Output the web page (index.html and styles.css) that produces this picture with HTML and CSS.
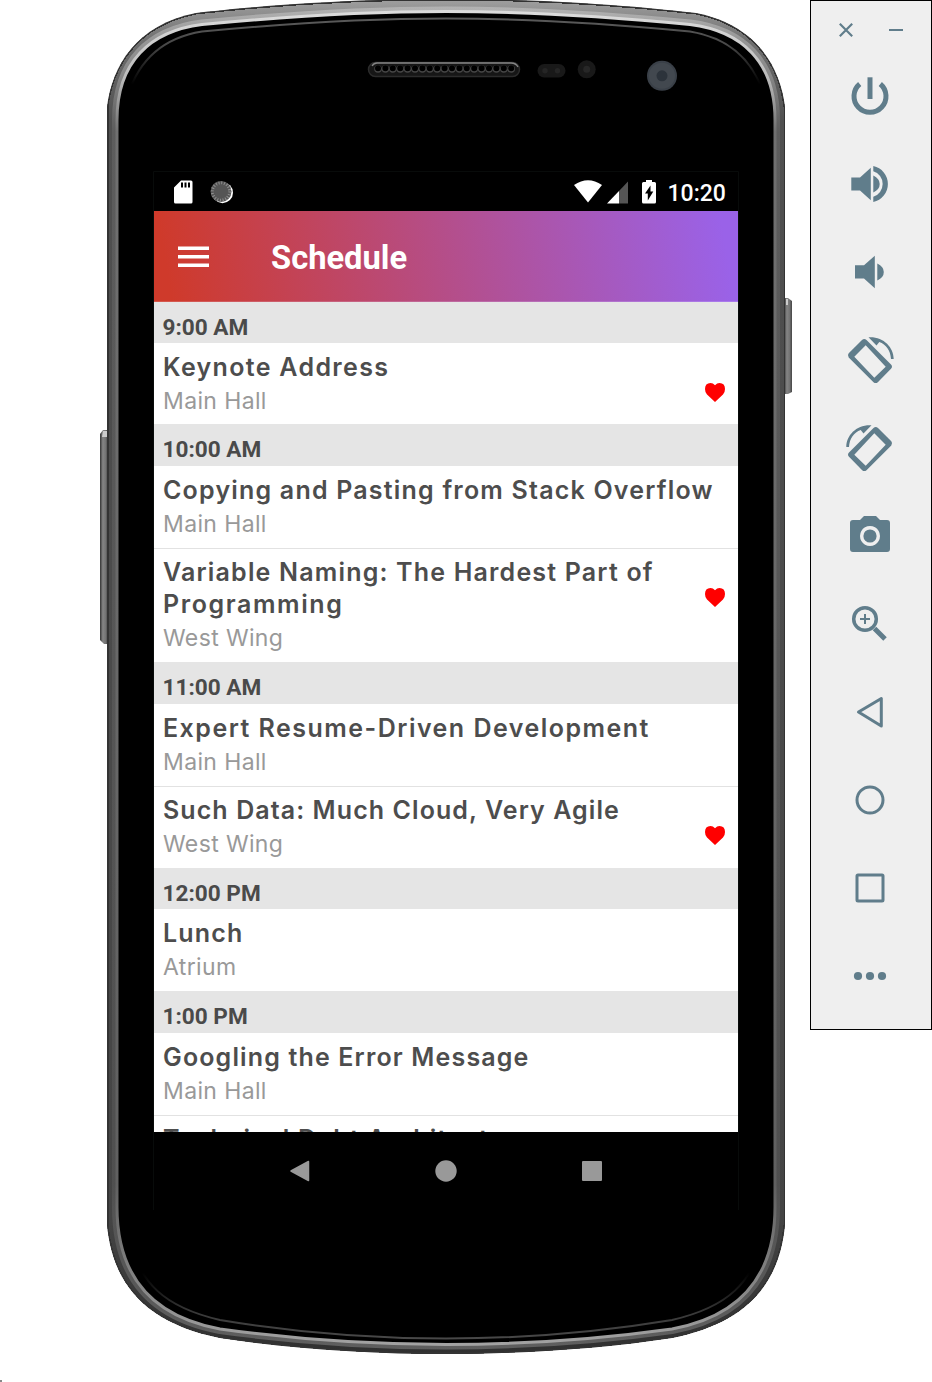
FILE: index.html
```html
<!DOCTYPE html>
<html lang="en">
<head>
<meta charset="utf-8">
<title>Schedule</title>
<link rel="stylesheet" href="styles.css">
</head>
<body>
<div class="desktop">
  <div class="phone">
    <svg class="shell" width="700" height="1382" viewBox="96 0 700 1382">
      <defs>
        <linearGradient id="body" x1="0" y1="0" x2="0" y2="1">
          <stop offset="0" stop-color="#a0a0a0"/><stop offset=".03" stop-color="#707070"/><stop offset=".09" stop-color="#505050"/><stop offset=".9" stop-color="#444"/><stop offset="1" stop-color="#303030"/>
        </linearGradient>
        <linearGradient id="edge" x1="0" y1="0" x2="0" y2="1">
          <stop offset="0" stop-color="#dcdcdc"/><stop offset=".05" stop-color="#bbb"/><stop offset=".09" stop-color="#707070"/><stop offset=".88" stop-color="#606060"/><stop offset=".96" stop-color="#888"/><stop offset="1" stop-color="#a2a2a2"/>
        </linearGradient>
        <linearGradient id="rim" x1="0" y1="0" x2="0" y2="1">
          <stop offset="0" stop-color="#5a5a5a"/><stop offset=".02" stop-color="#484848"/><stop offset=".05" stop-color="#000"/><stop offset=".95" stop-color="#000"/><stop offset=".98" stop-color="#383838"/><stop offset="1" stop-color="#484848"/>
        </linearGradient>
        <linearGradient id="key" x1="0" y1="0" x2="1" y2="0">
          <stop offset="0" stop-color="#333"/><stop offset=".35" stop-color="#858585"/><stop offset=".7" stop-color="#747474"/><stop offset="1" stop-color="#444"/>
        </linearGradient>
        <clipPath id="outline"><path d="M107 107C112 66 136 25 196 13C240 8 330 -1 446 -1S652 8 696 13C756 25 780 66 785 107V1225C779 1285 746 1323 672 1338C600 1349 520 1354 446 1354S292 1349 220 1338C146 1323 113 1285 107 1225Z"/></clipPath>
      </defs>
      <path d="M100 434l3-4h5v214h-4l-4-4z" fill="url(#key)"/>
      <path d="M784 298h4l4 3v91l-4 2h-4z" fill="url(#key)"/>
      <path d="M103 431h4v6h-5zM786 299h2v6h-2z" fill="#ccc"/>
      <g clip-path="url(#outline)">
        <path shape-rendering="crispEdges" d="M107 107C112 66 136 25 196 13C240 8 330 -1 446 -1S652 8 696 13C756 25 780 66 785 107V1225C779 1285 746 1323 672 1338C600 1349 520 1354 446 1354S292 1349 220 1338C146 1323 113 1285 107 1225Z" fill="url(#body)" stroke="#333" stroke-width="3"/>
        <path id="glass" d="M117 120C117 62 150 31 202 24.500C290 16 370 11.500 446 11.500S602 16 690 24.500C742 31 775 62 775 120V1207C775 1275 742 1316 672 1329C600 1339 520 1344.500 446 1344.500S292 1339 220 1329C150 1316 117 1275 117 1207Z" fill="none" stroke="url(#edge)" stroke-width="10" stroke-opacity=".4"/>
      </g>
      <path d="M117 120C117 62 150 31 202 24.500C290 16 370 11.500 446 11.500S602 16 690 24.500C742 31 775 62 775 120V1207C775 1275 742 1316 672 1329C600 1339 520 1344.500 446 1344.500S292 1339 220 1329C150 1316 117 1275 117 1207Z" fill="#000" stroke="url(#edge)" stroke-width="3"/>
      <path d="M128 95C139 60 162 38 202 31.500C290 23 370 18.500 446 18.500S602 23 690 31.500C730 38 753 60 764 95V1235C753 1283 728 1307 672 1320C600 1332 520 1338.500 446 1338.500S292 1332 220 1320C164 1307 139 1283 128 1235Z" fill="#000" stroke="url(#rim)" stroke-width="2"/>
      <rect x="368.500" y="62.500" width="151" height="14" rx="7" fill="#161616" stroke="#2c2c2c" stroke-width="1.500"/>
      <path d="M372 66q2-3 5-3h134q5 0 7 4" fill="none" stroke="#858585" stroke-width="1.300"/>
      <path d="M378 69h134" stroke="#464646" stroke-width="7.500" stroke-linecap="round" stroke-dasharray="0 7.400"/>
      <path d="M378 68.300h134" stroke="#000" stroke-width="6" stroke-linecap="round" stroke-dasharray="0 7.400"/>
      <rect x="537.500" y="64" width="28" height="13.500" rx="6.700" fill="#191919"/>
      <circle cx="545" cy="70.700" r="2.700" fill="#252525"/><circle cx="557.500" cy="70.700" r="2.700" fill="#252525"/>
      <circle cx="586.700" cy="69.300" r="9" fill="#191919"/><circle cx="586.700" cy="69.300" r="3.500" fill="#272727"/>
      <circle cx="662" cy="75.800" r="15" fill="#3a4048"/><circle cx="662" cy="75.800" r="13" fill="#42484f"/><circle cx="662" cy="75.800" r="5.500" fill="#2c333b"/>
      <path d="M153.500 1210V171.500h585V1210" fill="none" stroke="#080b0a"/>
    </svg>
    <div class="screen">
      <div class="status">
        <svg width="19" height="24" viewBox="0 0 19 24"><path fill="#fff" fill-rule="evenodd" d="M7 .5h10Q18.500.5 18.500 2v20q0 1.500-1.500 1.500H1.500Q0 23.500 0 22V7.500zM7 2.500v5h2v-5zm3.500 0v5h2v-5zm3.500 0v5h2v-5z"/></svg>
        <svg class="sync" width="24" height="24" viewBox="0 0 24 24"><circle cx="12.500" cy="12.700" r="10.500" fill="#fff"/><circle cx="11" cy="11.500" r="10.500" fill="#555"/><circle cx="11" cy="11.500" r="8.700" fill="none" stroke="#909090" stroke-width="3" stroke-dasharray="1 1.733"/></svg>
        <span class="grow"></span>
        <svg width="28" height="24" viewBox="0 0 28 24"><path fill="#fff" d="M0 5Q14-4.500 28 5L14 22.500z"/></svg>
        <svg class="signal" width="21" height="24" viewBox="0 0 21 24"><path fill="#555" d="M21 1.500v22H12V11z"/><path fill="#fff" d="M12 11v12.500H0z"/></svg>
        <svg class="battery" width="14" height="24" viewBox="0 0 14 24"><path fill="#fff" d="M4 0h6v2h2.500Q14 2 14 3.500V22q0 1.500-1.500 1.500h-11Q0 23.500 0 22V3.500Q0 2 1.500 2H4z"/><path fill="#000" d="M8.500 5.500v6h2.800L5.800 20.500v-7H3z"/></svg>
        <span class="clock">10:20</span>
      </div>
      <div class="appbar">
        <svg class="menu" width="31" height="22" viewBox="0 0 31 22"><path d="M0 2.200h31M0 10.800h31M0 19.300h31" stroke="#fff" stroke-width="3.500"/></svg>
        <h1>Schedule</h1>
      </div>
      <div class="list">
        <h2>9:00 AM</h2>
        <div class="row"><div><h3 class="t1">Keynote Address</h3><p>Main Hall</p></div><svg class="heart" viewBox="0 0 20 19"><path d="M10 19L2 11.500Q0 9.500 0 6Q0 0 5.500 0Q8 0 10 2.200Q12 0 14.500 0Q20 0 20 6Q20 9.500 18 11.500z"/></svg></div>
        <h2>10:00 AM</h2>
        <div class="row"><div><h3 class="t2">Copying and Pasting from Stack Overflow</h3><p>Main Hall</p></div></div>
        <div class="row tall"><div><h3 class="t3">Variable Naming: The Hardest Part of<br><span class="t9">Programming</span></h3><p>West Wing</p></div><svg class="heart" viewBox="0 0 20 19"><path d="M10 19L2 11.500Q0 9.500 0 6Q0 0 5.500 0Q8 0 10 2.200Q12 0 14.500 0Q20 0 20 6Q20 9.500 18 11.500z"/></svg></div>
        <h2>11:00 AM</h2>
        <div class="row"><div><h3 class="t4">Expert Resume-Driven Development</h3><p>Main Hall</p></div></div>
        <div class="row"><div><h3 class="t5">Such Data: Much Cloud, Very Agile</h3><p>West Wing</p></div><svg class="heart" viewBox="0 0 20 19"><path d="M10 19L2 11.500Q0 9.500 0 6Q0 0 5.500 0Q8 0 10 2.200Q12 0 14.500 0Q20 0 20 6Q20 9.500 18 11.500z"/></svg></div>
        <h2>12:00 PM</h2>
        <div class="row"><div><h3 class="t6">Lunch</h3><p>Atrium</p></div></div>
        <h2>1:00 PM</h2>
        <div class="row"><div><h3 class="t7">Googling the Error Message</h3><p>Main Hall</p></div></div>
        <div class="row"><div><h3 class="t8">Technical Debt Architecture</h3></div></div>
      </div>
      <div class="nav">
        <svg width="22" height="22" viewBox="0 0 22 22"><path d="M2 11L19.500 1.500v19z" fill="#999" stroke="#999" stroke-width="1.500" stroke-linejoin="round"/></svg>
        <svg width="22" height="22" viewBox="0 0 22 22"><circle cx="11" cy="11" r="10.700" fill="#999"/></svg>
        <svg width="22" height="22" viewBox="0 0 22 22"><rect x="1" y="1" width="20" height="20" rx="1" fill="#999"/></svg>
      </div>
    </div>
  </div>
  <div class="tools">
    <div class="window">
      <svg width="14" height="14" viewBox="0 0 14 14"><path d="M.8.8l12.400 12.400M13.200.8L.8 13.200" stroke="#607d8b" stroke-width="2.200"/></svg>
      <svg width="14" height="14" viewBox="0 0 14 14"><path d="M0 7h14" stroke="#607d8b" stroke-width="2"/></svg>
    </div>
    <svg class="tool" viewBox="-44 -44 88 88"><path d="M0-18.700V3" class="line w5"/><path d="M-10.300-12A16 16 0 1 0 10.300-12" class="line w5"/></svg>
    <svg class="tool" viewBox="-44 -44 88 88"><path d="M-18.700-6.500h8.700L.8-16.300v32.600L-10 6.500h-8.700zM3.300-8.500Q9.700-5.500 9.700 0T3.300 8.500zM3.300-18A18.400 18.400 0 0 1 3.300 18v-5.300A13.300 13.300 0 0 0 3.300-12.700z"/></svg>
    <svg class="tool" viewBox="-44 -44 88 88"><path d="M-15-6.700h9L4.800-16.300v32.600L-6 6.500h-9zM7.300-8.500Q13.800-5.500 13.800 0T7.300 8.500z"/></svg>
    <svg class="tool" viewBox="-44 -44 88 88"><path id="rotate" fill-rule="evenodd" d="M-21.300-6.800L-8-20Q-5.700-21.800-3.500-20L21 4.500Q23 6.700 21 8.800L7.800 22.200Q5.700 24 3.500 22.200L-21.300-2.600Q-23-4.700-21.300-6.800zM-15.700-3.300L4.300 17.700L15.700 6.700L-4.300-14.700zM-1.500-22.700C13-23.700 23.700-13 23.700-1H21C20.500-9.500 16-15.500 9.300-18L6.500-14.500z"/></svg>
    <svg class="tool" viewBox="-44 -44 88 88"><use href="#rotate" transform="scale(-1 1)"/></svg>
    <svg class="tool" viewBox="-44 -44 88 88"><path fill-rule="evenodd" d="M-6-20H6L10-16h7Q20-16 20-13V13Q20 16 17 16H-17Q-20 16-20 13V-13Q-20-16-17-16h7zM0-10a10 10 0 1 0 .01 0z"/><circle r="6.600"/></svg>
    <svg class="tool" viewBox="-44 -44 88 88"><circle cx="-5" cy="-5" r="11.300" class="line w35"/><path d="M4.500 4.500L15 15" class="line w5"/><path d="M-10-5H0M-5-10V0" class="line w2"/></svg>
    <svg class="tool" viewBox="-44 -44 88 88"><path d="M-11.500 0L11.300-13.500v27.500z" class="line w3"/></svg>
    <svg class="tool" viewBox="-44 -44 88 88"><circle r="13" class="line w3"/></svg>
    <svg class="tool" viewBox="-44 -44 88 88"><rect x="-13" y="-13" width="26" height="26" rx="1" class="line w3"/></svg>
    <svg class="tool" viewBox="-44 -44 88 88"><circle cx="-12" r="4.100"/><circle r="4.100"/><circle cx="12" r="4.100"/></svg>
  </div>
  <i class="speck"></i>
</div>
</body>
</html>
```
FILE: styles.css
```css
* { box-sizing: border-box; }
body { margin: 0; background: #fff; }
h1, h2, h3, p { margin: 0; }
svg { display: block; flex: none; }

.desktop {
  position: relative;
  display: flex;
  justify-content: space-between;
  align-items: flex-start;
  width: 932px;
  height: 1382px;
  overflow: hidden;
}
.speck { position: absolute; left: 0; bottom: 0; width: 2px; height: 2px; background: #888; }

.phone { position: relative; width: 796px; height: 1382px; padding: 172px 58px 0 154px; }
.shell { position: absolute; left: 96px; top: 0; }
.screen { position: relative; width: 584px; height: 1038px; display: flex; flex-direction: column; background: #000; }

.status { display: flex; align-items: center; height: 39px; padding: 0 13.500px 0 20px; color: #fff; }
.sync { margin-left: 16.500px; }
.grow { flex: 1; }
.signal { margin-left: 5px; }
.battery { margin-left: 14px; }
.clock { width: 57px; margin-left: 12px; font: 500 23px/37px Roboto, sans-serif; padding-top: 3px; text-align: right; white-space: nowrap; }

.appbar {
  display: flex;
  align-items: center;
  gap: 62px;
  height: 91px;
  flex: none;
  padding-left: 24px;
  position: relative;
  z-index: 1;
  background: linear-gradient(80deg, #cf3a2b 3%, #9a62e8 97%);
  border-bottom: 1px solid rgba(255, 255, 255, .15);
}
.menu { margin-top: 2px; }
.appbar h1 { color: #fff; font: 700 32.700px/40px Roboto, sans-serif; padding-top: 4px; }

.list { height: 831px; margin-top: -1px; overflow: hidden; background: #fff; flex: none; }
.list h2 { height: 41.400px; padding: 5px 8.500px 0; background: #e5e5e5; color: #4a4a4a; font: 700 22.600px/42px Roboto, sans-serif; }
.list h2:first-child { height: 42.200px; padding-top: 6px; }
.row { display: flex; justify-content: space-between; align-items: flex-start; height: 82.200px; padding: 8px 13.500px 0 9px; color: #4d4d4d; }
.list h2:first-child + .row { height: 81.200px; }
.tall { height: 114.200px; }
.row + .row { border-top: 1.500px solid #e2e2e2; padding-top: 7px; }
.row h3 { font: 600 25px/32px Inter, sans-serif; letter-spacing: 1.200px; white-space: nowrap; }
.row .t1 { letter-spacing: 1.320px; }
.row .t3 { letter-spacing: 1.180px; }
.row .t4 { letter-spacing: 1.480px; }
.row .t5 { letter-spacing: 1.080px; }
.row .t7 { letter-spacing: 1.150px; }
.row .t9 { letter-spacing: 1.600px; }
.row p { color: #999; font: 400 23px/36px Inter, sans-serif; letter-spacing: .370px; }
.heart { width: 20px; height: 19px; margin-top: 32px; fill: red; }

.nav { display: flex; justify-content: space-between; align-items: center; padding: 0 135px; height: 78px; }

.tools { width: 122px; height: 1030px; background: #efefef; border: 1px solid #000; flex: none; }
.window { display: flex; justify-content: space-between; padding: 22px 28px 0; height: 51px; }
.tool { width: 88px; height: 88px; margin-left: 15px; fill: #607d8b; }
.line { fill: none; stroke: #607d8b; stroke-linejoin: round; }
.w2 { stroke-width: 2; }
.w3 { stroke-width: 3; }
.w35 { stroke-width: 3.500; }
.w5 { stroke-width: 5; }
```
